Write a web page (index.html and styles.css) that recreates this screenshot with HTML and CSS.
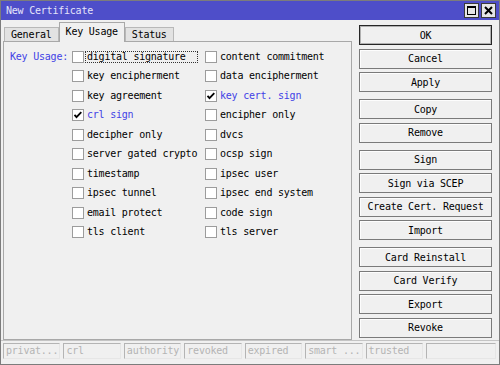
FILE: index.html
```html
<!DOCTYPE html>
<html lang="en">

<head>
  <meta charset="UTF-8">
  <meta name="viewport" content="width=device-width, initial-scale=1.0">
  <title>New Certificate</title>
  <link rel="stylesheet" href="styles.css">
</head>

<body>
  <div class="window">
    <!-- Barra de título -->
    <div class="titlebar">
      <span class="title">New Certificate</span>
      <div class="title-buttons">
        <span class="tbtn">
          <svg width="13" height="13" viewBox="0 0 13 13"><rect x="2.5" y="2.5" width="8" height="8" fill="none" stroke="#000" stroke-width="1"/><line x1="2" y1="3" x2="11" y2="3" stroke="#000" stroke-width="2"/></svg>
        </span>
        <span class="tbtn">
          <svg width="13" height="13" viewBox="0 0 13 13"><path d="M3 3l7 7M10 3l-7 7" stroke="#000" stroke-width="2"/></svg>
        </span>
      </div>
    </div>

    <div class="body">
      <div class="main">
        <div class="tabs">
          <div class="tab">General</div>
          <div class="tab active">Key Usage</div>
          <div class="tab">Status</div>
        </div>
        <div class="panel">
          <div class="usage">
            <div class="usage-label">Key Usage:</div>
            <div class="usage-grid" id="usage-grid">
              <!-- Opções inseridas via JavaScript -->
            </div>
          </div>
        </div>
      </div>

      <div class="actions">
        <button class="btn btn-default">OK</button>
        <button class="btn">Cancel</button>
        <button class="btn">Apply</button>
        <button class="btn group">Copy</button>
        <button class="btn">Remove</button>
        <button class="btn group">Sign</button>
        <button class="btn">Sign via SCEP</button>
        <button class="btn">Create Cert. Request</button>
        <button class="btn">Import</button>
        <button class="btn group">Card Reinstall</button>
        <button class="btn">Card Verify</button>
        <button class="btn">Export</button>
        <button class="btn">Revoke</button>
      </div>
    </div>

    <div class="statusbar">
      <div class="status">privat...</div>
      <div class="status">crl</div>
      <div class="status">authority</div>
      <div class="status">revoked</div>
      <div class="status">expired</div>
      <div class="status">smart ...</div>
      <div class="status">trusted</div>
      <div class="status"></div>
    </div>
  </div>

  <script>
    const options = [
      ['digital signature', false, true], ['content commitment', false],
      ['key encipherment', false], ['data encipherment', false],
      ['key agreement', false], ['key cert. sign', true],
      ['crl sign', true], ['encipher only', false],
      ['decipher only', false], ['dvcs', false],
      ['server gated crypto', false], ['ocsp sign', false],
      ['timestamp', false], ['ipsec user', false],
      ['ipsec tunnel', false], ['ipsec end system', false],
      ['email protect', false], ['code sign', false],
      ['tls client', false], ['tls server', false]
    ];

    const tick = '<svg width="10" height="10" viewBox="0 0 10 10"><path d="M1.5 4.8l2 2.3 4.8-5" fill="none" stroke="#000" stroke-width="1.8"/></svg>';

    function renderOptions() {
      const grid = document.getElementById('usage-grid');
      options.forEach(([name, checked, focused]) => {
        const item = document.createElement('div');
        item.className = 'option' + (checked ? ' checked' : '');
        item.innerHTML = '<span class="box">' + (checked ? tick : '') + '</span>' +
          '<span class="label' + (focused ? ' focus' : '') + '">' + name + '</span>';
        grid.appendChild(item);
      });
    }

    renderOptions();
  </script>
</body>

</html>
```

FILE: styles.css
```css
body {
  margin: 0;
  padding: 0;
  font-family: "DejaVu Sans Mono", "Liberation Mono", monospace;
  font-size: 10px;
  letter-spacing: -0.22px;
  color: #000;
}

.window {
  width: 500px;
  height: 365px;
  box-sizing: border-box;
  border: 1px solid #7c7c7c;
  background: #f0f0f0;
}

.titlebar {
  height: 19px;
  background: #4e4ec9;
  display: flex;
  align-items: center;
  justify-content: space-between;
  padding: 0 3px 0 5px;
}

.title {
  color: #e4e4fa;
}

.title-buttons {
  display: flex;
  gap: 2px;
}

.tbtn {
  width: 15px;
  height: 15px;
  box-sizing: border-box;
  border: 1px solid #3a3a3a;
  background: #e6e6e6;
  display: flex;
  align-items: center;
  justify-content: center;
}

.body {
  display: flex;
  height: 320px;
  padding-top: 2px;
  box-sizing: border-box;
}

.main {
  width: 349px;
  margin-left: 2px;
}

.tabs {
  display: flex;
  align-items: flex-end;
  height: 20px;
  margin-bottom: -1px;
  padding-left: 1px;
  position: relative;
  z-index: 1;
}

.tab {
  height: 14px;
  margin-bottom: 1px;
  box-sizing: border-box;
  padding: 0 6px;
  line-height: 13px;
  background: #e2e2e2;
  border: 1px solid #b8b8b8;
  border-bottom: none;
}

.tab.active {
  height: 20px;
  margin-bottom: 0;
  line-height: 18px;
  background: #f0f0f0;
  border-color: #a8a8a8;
}

.panel {
  height: 299px;
  box-sizing: border-box;
  border: 1px solid #a8a8a8;
  padding: 5px 0 0 6px;
}

.usage {
  display: flex;
}

.usage-label {
  width: 62px;
  height: 19.5px;
  line-height: 19px;
  color: #4242e6;
}

.usage-grid {
  display: grid;
  grid-template-columns: 133px 133px;
  grid-auto-rows: 19.5px;
}

.option {
  display: flex;
  align-items: center;
}

.box {
  width: 12px;
  height: 12px;
  box-sizing: border-box;
  border: 1px solid #9c9c9c;
  background: #fff;
  margin-right: 1px;
  display: flex;
  align-items: center;
  justify-content: center;
}

.label {
  line-height: 10px;
  padding: 0 1px;
  border: 1px solid transparent;
  white-space: nowrap;
}

.label.focus {
  border: 1px dotted #333;
  padding-right: 11px;
}

.option.checked .label {
  color: #4242e6;
}

.actions {
  width: 133px;
  margin-left: 7px;
  padding-top: 3px;
  display: flex;
  flex-direction: column;
  gap: 3.5px;
}

.btn {
  height: 20px;
  box-sizing: border-box;
  border: 1px solid #7a7a7a;
  box-shadow: inset 1px 1px 0 #fdfdfd;
  background: #f0f0f0;
  font-family: inherit;
  font-size: 10px;
  letter-spacing: -0.22px;
  color: #000;
  padding: 0;
  text-align: center;
}

.btn-default {
  border-color: #262626;
  box-shadow: inset 0 0 0 1px #b0b0b0;
}

.btn.group {
  margin-top: 3.5px;
}

.statusbar {
  height: 24px;
  box-sizing: border-box;
  border-top: 1px solid #c4c4c4;
  padding: 2px 3px 0 2px;
  display: grid;
  grid-template-columns: repeat(7, 1fr) 70px;
  gap: 3px;
  align-items: start;
}

.status {
  height: 16px;
  box-sizing: border-box;
  border: 1px solid;
  border-color: #b4b4b4 #e6e6e6 #e6e6e6 #b4b4b4;
  color: #b4b4b4;
  padding-left: 2px;
  line-height: 14px;
  white-space: nowrap;
  overflow: hidden;
}
```
